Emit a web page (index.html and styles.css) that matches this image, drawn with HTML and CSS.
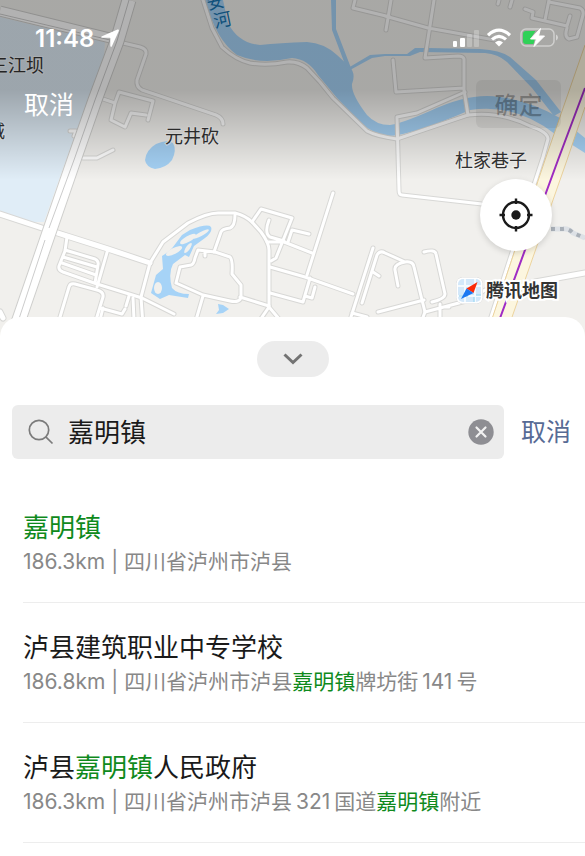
FILE: index.html
```html
<!DOCTYPE html>
<html lang="zh-CN">
<head>
<meta charset="utf-8">
<meta name="viewport" content="width=device-width, initial-scale=1">
<title>选择位置</title>
<link rel="stylesheet" href="styles.css">
</head>
<body>
<main class="picker">
  <section class="map" aria-label="地图">
    <svg class="map-canvas" viewBox="0 0 585 340" preserveAspectRatio="xMidYMin slice" aria-hidden="true">
      <defs>
        <g id="roads">
          <path d="M123 43L140 47Q147 49 146 54L137 80Q136 87 142 90L157 95L216 115Q223 118 223 124"/>
          <path d="M103 99L115 103L119 92L153 101L148 120M115 103L111 120L125 127L131 113L146 115"/>
          <path d="M83 158H97L113 150M70 131H76L74 136"/>
          <path d="M203 0L212 28L222 47Q236 60 250 63Q267 66 287 62Q298 61 307 68L320 82L333 98L367 131Q376 136 397 139"/>
          <path d="M67 237L65 251L59 266Q58 270 63 272L97 284L142 298L174 314M65 250L95 259Q99 261 98 265L95 283M63 257L97 267M62 263L96 275M108 249L97 287"/>
          <path d="M150 263L141 297L144 340M60 317L69 287Q70 283 75 284L97 290Q104 292 103 297L96 320M100 308L122 314L125 309M103 308L100 320M129 296L126 306M133 298L134 320"/>
          <path d="M150 263L163 242L188 223Q207 213 218 213H235Q246 216 252 222L261 232Q269 243 269 250V307L260 320M269 307L280 320"/>
          <path d="M235 215Q235 226 230 228Q222 229 221 232L214 252M252 222L261 209L292 218L282 243L276 258L271 261M269 220Q264 233 270 237L284 241M267 242H284L312 253M288 242L292 230L309 234M333 193L307 275"/>
          <path d="M270 267L305 277L353 294M310 278L303 302L270 293M305 296L312 298L315 287"/>
          <path d="M176 283L180 267L191 265Q194 264 195 258L198 250L215 252L230 257Q233 260 232 274L241 285V297Q240 303 230 301L203 295L176 283M240 297L269 306M203 296L196 320M205 252V256"/>
          <path d="M373 248L350 320M352 313L367 317M362 303L377 255Q380 250 385 253L405 262Q413 261 414 267L422 300L425 312L422 320M373 272L379 276M378 312L424 300M405 262Q394 264 395 270L398 286"/>
          <path d="M424 252Q435 249 436 254L445 294Q445 299 432 302M425 312L470 300L485 290M440 304V320M443 307H449"/>
          <path d="M482 204L402 195Q399 195 399 190L397 117L417 113L465 92M397 139L468 115Q500 111 530 126Q548 132 548 139L543 157L490 320"/>
          <path d="M468 115L464 90V59Q463 56 458 56L425 58L434 0M393 60L396 92L464 88M385 16L428 28L495 40M391 0L386 30M390 17L353 8L355 0"/>
          <path d="M499 0L498 4M512 0L510 7M525 9L533 12L532 18L567 26L570 16M549 0L545 20M549 2L580 8Q584 10 583 15L577 37L569 39Q564 37 567 28"/>
        </g>
        <g id="avenues">
          <path d="M0 214L42 228L67 236L108 249L150 263M535 282L585 273M0 312L3 318"/>
        </g>
      </defs>
      <rect class="land" width="585" height="340"/>
      <path class="campus" d="M0 17L105 42L104 56L66 160L44 222L33 222L0 212Z"/>
      <g class="water">
        <path d="M205 0H223L228 23Q238 43 260 45Q280 43 307 42Q324 43 337 55L350 67Q356 74 352 84Q351 94 367 115Q376 125 390 125Q400 124 430 111Q470 92 500 97Q530 101 560 118L585 138V153L555 134Q515 103 470 110Q415 134 390 136Q375 136 360 122L337 98L318 75Q308 59 292 58Q260 65 237 55Q216 40 205 0Z"/>
        <path d="M331 0H336L336 29L351 68L346 67L332 30Z"/>
        <path d="M348 68L370 55L385 54H407L415 48L428 48L480 49Q500 50 510 57L536 80L561 112L554 116L532 88L507 62Q498 54 485 53L420 52L410 56H385L372 58L350 70Z"/>
        <path d="M145 160Q146 150 156 144Q167 139 173 143Q177 150 172 160Q166 168 155 169Q146 167 145 160Z"/>
        <path d="M162 256Q170 251 173 247L182 235L190 230Q208 223 211 227Q213 232 205 238L194 246L189 257L185 255L173 264Q168 273 172 288Q177 294 189 294L188 298L169 295L160 299L151 293L156 275L163 269Z"/>
        <path d="M218 304L223 305L229 309L223 313L216 314L219 310Z"/>
      </g>
      <g class="island">
        <ellipse cx="158" cy="288" rx="4" ry="6"/>
        <ellipse cx="174" cy="251" rx="9" ry="3" transform="rotate(-27 174 251)"/>
        <ellipse cx="188" cy="239" rx="9" ry="3" transform="rotate(-30 188 239)"/>
        <ellipse cx="188" cy="248" rx="6" ry="2" transform="rotate(-55 188 248)"/>
        <ellipse cx="201" cy="234" rx="9" ry="2" transform="rotate(-29 201 234)"/>
      </g>
      <use href="#roads" class="road-edge"/>
      <use href="#avenues" class="avenue-edge"/>
      <use href="#roads" class="road-fill"/>
      <use href="#avenues" class="avenue-fill"/>
      <path class="trunk-edge" d="M0 11L114 39"/>
      <path class="trunk-fill" d="M0 11L114 39"/>
      <path class="main-edge" d="M129 0L117 41L95 100L74 160L12 340"/>
      <path class="main-fill" d="M129 0L117 41L95 100L74 160L12 340"/>
      <path class="median" d="M0 14L110 40M129 0L117 41L95 100L74 160L49 228M45 240L12 340"/>
      <path class="highway" d="M601 0L585 45L545 160L485 340H504L567 160L622 0Z"/>
      <path class="highway-line" d="M585 45L545 160L485 340M504 340L567 160L585 107"/>
      <path class="metro" d="M585 88L558 160L492 340"/>
      <path class="rail" d="M551 229H563Q568 228 573 233L585 238"/>
      <path class="rail-ties" d="M551 229H563Q568 228 573 233L585 238"/>
      <g class="label">
        <text x="-10" y="72">三江坝</text>
        <text x="-13" y="138">城</text>
        <text x="165" y="143">元井砍</text>
        <text x="455" y="167">杜家巷子</text>
      </g>
      <g class="river-label">
        <text transform="translate(208 10) rotate(-12)">安</text>
        <text transform="translate(215 28) rotate(-12)">河</text>
      </g>
    </svg>
    <div class="topbar">
      <div class="status">
        <div class="clock">
          <span>11:48</span>
          <svg width="20" height="20" viewBox="0 0 20 20" aria-hidden="true"><path d="M17.500 1.600Q19.500 1 18.800 3L12 18Q11 20 10.300 17.700V10.500Q10.300 9.800 9.600 9.800H2.500Q0 9.500 2 8.300Z" fill="#fff"/></svg>
        </div>
        <svg class="indicators" width="105" height="22" viewBox="0 0 105 22" aria-hidden="true">
          <g fill="#fff">
            <rect x="0" y="14" width="4" height="6" rx="1"/>
            <rect x="7" y="11" width="5" height="9" rx="1"/>
            <rect x="14" y="7" width="5" height="13" rx="1" opacity=".25"/>
            <rect x="21" y="3" width="5" height="17" rx="1" opacity=".25"/>
          </g>
          <g fill="none" stroke="#fff" stroke-width="3.200">
            <path d="M35 8.200Q46 -1.800 57 8.200"/>
            <path d="M39 12.400Q46 6.200 53 12.400"/>
          </g>
          <path d="M42 15.500Q46 12 50 15.500L46 19.400Z" fill="#fff"/>
          <rect x="68" y="2" width="33" height="17" rx="5" fill="none" stroke="#fff" stroke-opacity=".45" stroke-width="1.500"/>
          <path d="M103 7.500Q105 8.500 105 10.500Q105 12.500 103 13.500Z" fill="#fff" fill-opacity=".5"/>
          <path d="M73 4H82.500L78 11H82L80.500 17H73Q70 17 70 14V7Q70 4 73 4Z" fill="#30d158"/>
          <path d="M87.500 1.500L77.500 12H83.500L81 19.500L91.500 9H85.500Z" fill="#fff" stroke="#fff" stroke-linejoin="round"/>
        </svg>
      </div>
      <div class="actions">
        <button class="back" type="button">取消</button>
        <button class="confirm" type="button" disabled>确定</button>
      </div>
    </div>
    <button class="locate" type="button" aria-label="定位">
      <svg width="36" height="36" viewBox="0 0 36 36" aria-hidden="true">
        <g fill="none" stroke="#1a1a1a" stroke-width="2.400"><circle cx="18" cy="18" r="13"/><path d="M18 1.500V7M18 29V34.500M1.500 18H7M29 18H34.500"/></g>
        <circle cx="18" cy="18" r="4.700" fill="#1a1a1a"/>
      </svg>
    </button>
    <div class="brand">
      <svg width="27" height="27" viewBox="0 0 27 27" aria-hidden="true">
        <rect x=".5" y=".5" width="26" height="26" rx="6" fill="#fff" stroke="#dadada"/>
        <rect x="2" y="2" width="23" height="23" rx="5" fill="#d3e8fa"/>
        <path d="M2 9H25M2 19H25M9 2V25M19 2V25" stroke="#f4fafe" stroke-width="2"/>
        <path d="M3 19H12M20 18H25M18 20V25" stroke="#a8dcf4" stroke-width="1.500"/>
        <path d="M21.500 5L17.500 16L10.500 11.500Z" fill="#fb2b09"/>
        <path d="M10.500 11.500L17.500 16L5 22Z" fill="#1b78f2"/>
      </svg>
      <span>腾讯地图</span>
    </div>
  </section>

  <section class="sheet">
    <button class="handle" type="button" aria-label="收起">
      <svg width="20" height="12" viewBox="0 0 20 12" aria-hidden="true"><path d="M1.500 1.500L10 9.500L18.500 1.500" fill="none" stroke="#737373" stroke-width="3"/></svg>
    </button>
    <form class="search">
      <div class="field">
        <svg width="26" height="26" viewBox="0 0 26 26" aria-hidden="true"><g fill="none" stroke="#7b7b7b" stroke-width="1.700"><circle cx="11" cy="11" r="9.700"/><path d="M17.800 17.800L24.500 24.500"/></g></svg>
        <input type="text" value="嘉明镇" aria-label="搜索地点">
        <button class="clear" type="button" aria-label="清除">
          <svg width="26" height="26" viewBox="0 0 26 26" aria-hidden="true"><circle cx="13" cy="13" r="12.700" fill="#8e8e93"/><path d="M8.500 8.500L17.500 17.500M17.500 8.500L8.500 17.500" stroke="#f2f2f2" stroke-width="2.200" stroke-linecap="round"/></svg>
        </button>
      </div>
      <button class="cancel" type="button">取消</button>
    </form>
    <ul class="results">
      <li>
        <h2><em>嘉明镇</em></h2>
        <p>186.3km | 四川省泸州市泸县</p>
      </li>
      <li>
        <h2>泸县建筑职业中专学校</h2>
        <p>186.8km | 四川省泸州市泸县<em>嘉明镇</em>牌坊街<span class="num">141</span>号</p>
      </li>
      <li>
        <h2>泸县<em>嘉明镇</em>人民政府</h2>
        <p>186.3km | 四川省泸州市泸县<span class="num">321</span>国道<em>嘉明镇</em>附近</p>
      </li>
    </ul>
  </section>
</main>
</body>
</html>
```
FILE: styles.css
```css
* {
  box-sizing: border-box;
  margin: 0;
  padding: 0;
}

body {
  background: #fff;
  color: #1a1a1a;
  font-family: Inter, "Noto Sans CJK SC", sans-serif;
}

button,
input {
  border: 0;
  background: none;
  color: inherit;
  font: inherit;
}

button {
  display: flex;
  align-items: center;
  justify-content: center;
}

svg {
  display: block;
  flex: none;
}

em {
  color: #0f8a1c;
  font-style: normal;
}

.picker {
  display: flex;
  flex-direction: column;
  min-height: 100vh;
}

/* Map */
.map {
  position: relative;
  height: 340px;
  overflow: hidden;
}

.map-canvas {
  position: absolute;
  inset: 0;
  width: 100%;
  height: 100%;
}

.land { fill: #f1f0ed; }
.campus { fill: #e0edf7; }
.water { fill: #a6d3f7; }
.island { fill: #f1f0ed; }

.road-edge,
.road-fill,
.avenue-edge,
.avenue-fill {
  fill: none;
  stroke-linecap: round;
  stroke-linejoin: round;
}

.road-edge { stroke: #d8d8d6; stroke-width: 5px; }
.road-fill { stroke: #fff; stroke-width: 3px; }
.avenue-edge { stroke: #d8d8d6; stroke-width: 7px; }
.avenue-fill { stroke: #fff; stroke-width: 5px; }

.trunk-edge,
.trunk-fill,
.main-edge,
.main-fill,
.median,
.highway-line,
.metro,
.rail,
.rail-ties {
  fill: none;
}

.trunk-edge { stroke: #cfcfcd; stroke-width: 11px; }
.trunk-fill { stroke: #fff; stroke-width: 9px; }
.main-edge { stroke: #cfcfcd; stroke-width: 15px; }
.main-fill { stroke: #fff; stroke-width: 13px; }
.median { stroke: #ccc; stroke-width: 1px; }
.highway { fill: #fcf6df; }
.highway-line { stroke: #ecd39d; stroke-width: 1px; }
.metro { stroke: #a02cc4; stroke-width: 2px; }
.rail { stroke: #dde1e6; stroke-width: 5px; }
.rail-ties { stroke: #a9b0b8; stroke-width: 4px; stroke-dasharray: 4 5; }

.label {
  fill: #333;
  stroke: #fff;
  stroke-opacity: .6;
  stroke-width: 2px;
  paint-order: stroke;
  font-size: 18px;
}

.river-label {
  fill: #1673b0;
  font-size: 18px;
}

.topbar {
  position: relative;
  height: 180px;
  padding: 24px 24px 0;
  background: linear-gradient(rgba(0, 0, 0, .3) 50%, rgba(0, 0, 0, .07) 88%, transparent);
  color: #fff;
}

.status {
  display: flex;
  align-items: center;
  justify-content: space-between;
  height: 28px;
  padding: 0 3px 0 11px;
}

.clock {
  display: flex;
  align-items: center;
  gap: 6px;
  font-size: 24px;
  font-weight: 600;
}

.actions {
  display: flex;
  align-items: center;
  justify-content: space-between;
  margin-top: 28px;
  height: 48px;
  font-size: 25px;
}

.back {
  padding-bottom: 2px;
}

.confirm {
  width: 85px;
  height: 48px;
  padding-bottom: 2px;
  border-radius: 6px;
  background: rgba(0, 0, 0, .06);
  color: rgba(0, 0, 0, .28);
  font-size: 24px;
  font-weight: 500;
}

.locate {
  position: absolute;
  top: 179px;
  right: 33px;
  width: 72px;
  height: 72px;
  border-radius: 50%;
  background: #fff;
  box-shadow: 0 2px 6px rgba(0, 0, 0, .15);
}

.brand {
  position: absolute;
  top: 277px;
  right: 27px;
  display: flex;
  align-items: center;
  gap: 3px;
  color: #333;
  font-size: 18px;
  font-weight: 700;
  line-height: 27px;
  -webkit-text-stroke: 4px #fff;
  paint-order: stroke;
}

/* Search sheet */
.sheet {
  position: relative;
  display: flex;
  flex: 1;
  flex-direction: column;
  margin-top: -23px;
  padding-top: 24px;
  border-radius: 20px 20px 0 0;
  background: #fff;
}

.handle {
  align-self: center;
  width: 72px;
  height: 36px;
  border-radius: 18px;
  background: #ececec;
}

.search {
  display: flex;
  align-items: center;
  gap: 17px;
  margin-top: 28px;
  padding: 0 14px 0 12px;
}

.field {
  display: flex;
  flex: 1;
  align-items: center;
  gap: 14px;
  min-width: 0;
  height: 54px;
  padding: 0 10px 0 16px;
  border-radius: 6px;
  background: #ececec;
}

.field input {
  flex: 1;
  min-width: 0;
  height: 54px;
  padding-bottom: 4px;
  outline: 0;
  font-size: 26px;
}

.cancel {
  padding-bottom: 4px;
  color: #576b95;
  font-size: 25px;
}

.results {
  margin: 24px 0 0 23px;
  list-style: none;
}

.results li {
  padding: 27px 0 24px;
  border-bottom: 1px solid #ededed;
}

.results h2 {
  font-size: 26px;
  font-weight: 400;
  line-height: 36px;
}

.results p {
  color: #888;
  font-size: 21px;
  line-height: 32px;
}

.num {
  margin: 0 4px;
}
```
